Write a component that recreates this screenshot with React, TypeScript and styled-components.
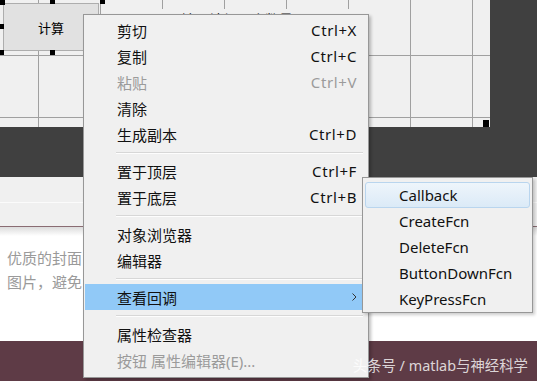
import { FC } from 'react';
import styled, { createGlobalStyle } from 'styled-components';

const GlobalStyle = createGlobalStyle`
  html, body {
    margin: 0;
    padding: 0;
    background: #ffffff;
  }
  body {
    font-family: 'Noto Sans', 'Noto Sans CJK SC', sans-serif;
  }
`;

type MenuEntry = { label: string; shortcut?: string; disabled?: boolean; active?: boolean; sub?: boolean } | 'sep';

const menuItems: MenuEntry[] = [
  { label: '剪切', shortcut: 'Ctrl+X' },
  { label: '复制', shortcut: 'Ctrl+C' },
  { label: '粘贴', shortcut: 'Ctrl+V', disabled: true },
  { label: '清除' },
  { label: '生成副本', shortcut: 'Ctrl+D' },
  'sep',
  { label: '置于顶层', shortcut: 'Ctrl+F' },
  { label: '置于底层', shortcut: 'Ctrl+B' },
  'sep',
  { label: '对象浏览器' },
  { label: '编辑器' },
  'sep',
  { label: '查看回调', active: true, sub: true },
  'sep',
  { label: '属性检查器' },
  { label: '按钮 属性编辑器(E)...', disabled: true },
];

const callbacks = ['Callback', 'CreateFcn', 'DeleteFcn', 'ButtonDownFcn', 'KeyPressFcn'];

// selection handles round the button on the layout canvas
const handles = [
  { x: 0, y: 0 },
  { x: 50, y: -1 },
  { x: 100, y: -1 },
  { x: -1, y: 24 },
  { x: -1, y: 50 },
  { x: 50, y: 50 },
];

const App: FC = () => {
  return (
    <Page>
      <GlobalStyle />
      <Designer>
        <Canvas>
          <StaticText>输入神经元个数量</StaticText>
          <PushButton>计算</PushButton>
          {handles.map((h, i) => (
            <Handle key={i} style={{ left: h.x, top: h.y }} />
          ))}
          <CornerGrip />
        </Canvas>
        <Gutter />
      </Designer>
      <DarkBand />
      <ToolStrip />
      <Article>
        <Hint>优质的封面</Hint>
        <Hint>图片，避免</Hint>
      </Article>
      <Footer />

      <ContextMenu>
        {menuItems.map((item, i) =>
          item === 'sep' ? (
            <Separator key={i} />
          ) : (
            <MenuItem key={i} $disabled={item.disabled} $active={item.active}>
              <span>{item.label}</span>
              {item.shortcut && <Shortcut>{item.shortcut}</Shortcut>}
              {item.sub && (
                <svg width="5" height="8" viewBox="0 0 5 8">
                  <path d="M0.5 0.5 L4 4 L0.5 7.5" fill="none" stroke="#333" strokeWidth="1" />
                </svg>
              )}
            </MenuItem>
          ),
        )}
      </ContextMenu>

      <SubMenu>
        {callbacks.map((name, i) => (
          <SubItem key={name} $hover={i === 0}>
            {name}
          </SubItem>
        ))}
      </SubMenu>

      <Watermark>头条号 / matlab与神经科学</Watermark>
    </Page>
  );
};

export default App;

const Page = styled.div`
  position: relative;
  width: 537px;
  height: 381px;
  overflow: hidden;
  display: flex;
  flex-direction: column;
`;

const Designer = styled.div`
  display: flex;
  height: 127px;
`;

const Canvas = styled.div`
  position: relative;
  width: 490px;
  background-color: #f0f0f0;
  background-image: linear-gradient(to right, #a0a0a0 1px, transparent 1px),
    linear-gradient(to bottom, #a0a0a0 1px, transparent 1px);
  background-size: 62px 62px;
  background-position: 38px 55px;
`;

const Gutter = styled.div`
  flex: 1;
  background: #404040;
`;

const StaticText = styled.div`
  position: absolute;
  left: 112px;
  top: 9px;
  width: 250px;
  height: 40px;
  background: #f0f0f0;
  font-size: 14px;
  color: #111;
  text-align: center;
  line-height: 16px;
  padding-top: 3px;
  box-sizing: border-box;
`;

const PushButton = styled.div`
  position: absolute;
  left: 3px;
  top: 3px;
  width: 96px;
  height: 48px;
  box-sizing: border-box;
  background: #e1e1e1;
  border: 1px solid #adadad;
  display: flex;
  align-items: center;
  justify-content: center;
  font-size: 13px;
  color: #000;
`;

const Handle = styled.div`
  position: absolute;
  width: 5px;
  height: 5px;
  background: #000;
`;

const CornerGrip = styled.div`
  position: absolute;
  right: 1px;
  bottom: 0;
  width: 6px;
  height: 7px;
  background: #000;
`;

const DarkBand = styled.div`
  height: 50px;
  background: #404040;
`;

const ToolStrip = styled.div`
  height: 50px;
  background: #f0f0f0;
  border-bottom: 1px solid #8a6c73;
  box-sizing: border-box;
  background-image: linear-gradient(to bottom, transparent 25px, #fbfbfb 25px, #fbfbfb 26px, transparent 26px);
`;

const Article = styled.div`
  flex: 1;
  background: linear-gradient(to bottom, #dcdcdc 0, #ffffff 9px);
  padding: 22px 0 0 7px;
  display: flex;
  flex-direction: column;
  gap: 6px;
`;

const Hint = styled.div`
  font-size: 15px;
  line-height: 18px;
  color: #9a9a9a;
  white-space: nowrap;
`;

const Footer = styled.div`
  height: 40px;
  background: #5e3b46;
`;

const ContextMenu = styled.div`
  position: absolute;
  left: 83px;
  top: 14px;
  width: 286px;
  height: 364px;
  box-sizing: border-box;
  background: #f0f0f0;
  border: 1px solid #979797;
  box-shadow: 2px 2px 3px rgba(0, 0, 0, 0.25);
  padding: 2px 5px 0 1px;
  z-index: 2;
`;

const MenuItem = styled.div<{ $disabled?: boolean; $active?: boolean }>`
  height: 26px;
  display: flex;
  align-items: center;
  justify-content: space-between;
  padding: 0 6px 0 32px;
  font-size: 15px;
  color: ${({ $disabled }) => ($disabled ? '#9b9b9b' : '#111')};
  background: ${({ $active }) => ($active ? '#91c9f7' : 'transparent')};
`;

const Shortcut = styled.span`
  letter-spacing: 0.6px;
`;

const Separator = styled.div`
  height: 1px;
  margin: 5px 0 4px 31px;
  background: #d7d7d7;
  border-bottom: 1px solid #fdfdfd;
`;

const SubMenu = styled.div`
  position: absolute;
  left: 362px;
  top: 177px;
  width: 171px;
  height: 136px;
  box-sizing: border-box;
  background: #f0f0f0;
  border: 1px solid #979797;
  box-shadow: 2px 2px 3px rgba(0, 0, 0, 0.2);
  padding: 4px 2px 0 2px;
  z-index: 3;
`;

const SubItem = styled.div<{ $hover?: boolean }>`
  height: 26px;
  box-sizing: border-box;
  display: flex;
  align-items: center;
  padding-left: 33px;
  font-size: 15px;
  color: #111;
  border-radius: 3px;
  border: 1px solid ${({ $hover }) => ($hover ? '#b9d5ee' : 'transparent')};
  background: ${({ $hover }) => ($hover ? 'linear-gradient(to bottom, #eef5fb, #dbeaf7)' : 'transparent')};
`;

const Watermark = styled.div`
  position: absolute;
  right: 9px;
  bottom: 6px;
  font-size: 14.4px;
  color: rgba(255, 255, 255, 0.8);
  z-index: 4;
  white-space: nowrap;
`;
